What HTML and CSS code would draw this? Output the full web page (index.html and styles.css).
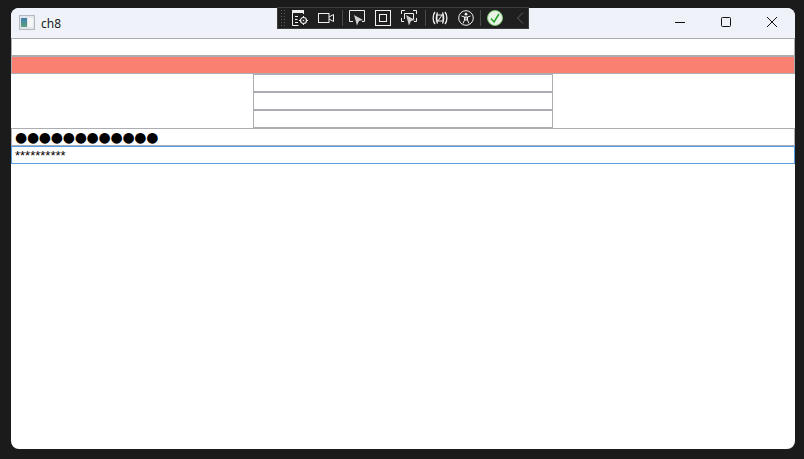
FILE: index.html
```html
<!DOCTYPE html>
<html lang="en">
<head>
    <meta charset="UTF-8">
    <meta name="viewport" content="width=device-width, initial-scale=1.0">
    <title>ch8</title>
    <link rel="stylesheet" href="styles.css">
</head>
<body>
    <div class="window">
        <header class="titlebar">
            <svg class="app-icon" width="16" height="16" viewBox="0 0 16 16">
                <defs>
                    <linearGradient id="appFill" x1="0" y1="0" x2="0" y2="1">
                        <stop offset="0" stop-color="#3f7fb0"/>
                        <stop offset="1" stop-color="#5fa07c"/>
                    </linearGradient>
                </defs>
                <rect x="0.5" y="0.5" width="15" height="14" fill="#e2e6ea" stroke="#b4b9bf"/>
                <rect x="2" y="3" width="6" height="9" fill="url(#appFill)"/>
                <rect x="9" y="3" width="5" height="9" fill="#f4f6f6"/>
            </svg>
            <span class="app-title">ch8</span>
            <div class="caption-buttons">
                <svg width="46" height="30" viewBox="0 0 46 30"><path d="M18 14.5h10" stroke="#111" fill="none"/></svg>
                <svg width="46" height="30" viewBox="0 0 46 30"><rect x="18.5" y="9.5" width="9" height="9" rx="1" stroke="#111" fill="none"/></svg>
                <svg width="46" height="30" viewBox="0 0 46 30"><path d="M18 9l10 10M28 9l-10 10" stroke="#111" fill="none"/></svg>
            </div>
        </header>

        <div class="content">
            <input class="field" type="text">
            <input class="field field-red" type="text">
            <div class="center-stack">
                <input class="field" type="text">
                <input class="field" type="text">
                <input class="field" type="text">
            </div>
            <input class="field field-bullets" type="text" value="●●●●●●●●●●●●">
            <input class="field field-focused" type="text" value="**********">
        </div>
    </div>

    <!-- debug toolbar floating over the title bar -->
    <div class="toolbar">
        <svg class="gripper" width="6" height="18" viewBox="0 0 6 18">
            <path d="M1 1h1v1H1zM4 1h1v1H4zM1 4h1v1H1zM4 4h1v1H4zM1 7h1v1H1zM4 7h1v1H4zM1 10h1v1H1zM4 10h1v1H4zM1 13h1v1H1zM4 13h1v1H4zM1 16h1v1H1zM4 16h1v1H4z" fill="#5c5c5c"/>
        </svg>
        <div class="tool-group">
            <svg width="16" height="16" viewBox="0 0 16 16">
                <path d="M0.5 1v14.5h6M11.500 1v3" stroke="#f0f0f0" fill="none"/>
                <rect x="0" y="0" width="12" height="3" fill="#f0f0f0"/>
                <path d="M3 6.500h3M3 9.500h2.500M3 12.500h3" stroke="#f0f0f0" fill="none"/>
                <circle cx="11.500" cy="10.500" r="3" stroke="#f0f0f0" stroke-width="1.200" fill="none"/>
                <circle cx="11.500" cy="10.500" r="0.800" fill="#f0f0f0"/>
                <path d="M11.500 6v1.500M11.500 13.500V15M7 10.500h1.500M14.500 10.500H16" stroke="#f0f0f0" fill="none"/>
            </svg>
            <svg width="16" height="16" viewBox="0 0 16 16">
                <rect x="0.500" y="3.500" width="10.500" height="9" stroke="#f0f0f0" fill="none"/>
                <path d="M11 7l4.500-2.500v7L11 9" stroke="#f0f0f0" fill="none"/>
            </svg>
        </div>
        <span class="sep"></span>
        <div class="tool-group">
            <svg width="16" height="16" viewBox="0 0 16 16">
                <path d="M4 11.500H0.500v-11h15v11H13" stroke="#f0f0f0" fill="none"/>
                <path d="M5 5l9 5-4 1-2 4.500z" fill="#cfcfcf"/>
            </svg>
            <svg width="16" height="16" viewBox="0 0 16 16">
                <rect x="0.500" y="0.500" width="15" height="15" stroke="#f0f0f0" fill="none"/>
                <rect x="4.500" y="4.500" width="7" height="7" stroke="#f0f0f0" fill="none"/>
            </svg>
            <svg width="16" height="16" viewBox="0 0 16 16">
                <path d="M0.500 4V0.500H4M12 0.500h3.500V4M0.500 8v3.500H3M15.500 8v3.500H13M3.500 9V3.500h9V9" stroke="#f0f0f0" fill="none"/>
                <path d="M5 5l9 5-4 1-2 4.500z" fill="#cfcfcf"/>
            </svg>
        </div>
        <span class="sep"></span>
        <div class="tool-group">
            <svg width="16" height="16" viewBox="0 0 16 16">
                <path d="M3 2C0.500 5 0.500 11 3 14M13 2C15.500 5 15.500 11 13 14M5.500 2.500C4 6 4 10 5.500 13.500M10.500 2.500C12 6 12 10 10.500 13.500" stroke="#f0f0f0" stroke-width="1.300" fill="none"/>
                <path d="M5 5h6v6H5zM5.500 11.500l5-7" stroke="#f0f0f0" fill="none"/>
            </svg>
            <svg width="16" height="16" viewBox="0 0 16 16">
                <circle cx="8" cy="8" r="7.300" stroke="#f0f0f0" fill="none"/>
                <circle cx="8" cy="4.200" r="1.400" fill="#f0f0f0"/>
                <path d="M3.500 6l3 1v3l-1.500 3.500M12.500 6l-3 1v3l1.500 3.500M6.500 7h3M6.500 10h3M8 7v3" stroke="#f0f0f0" fill="none"/>
            </svg>
        </div>
        <span class="sep sep-tight"></span>
        <svg class="check" width="16" height="16" viewBox="0 0 16 16">
            <circle cx="8" cy="8" r="7.500" fill="#e8f3e6" stroke="#7cc36f"/>
            <path d="M4 8.500l3 3.500 5-8" stroke="#2aa52a" stroke-width="1.600" fill="none"/>
        </svg>
        <svg class="chevron" width="8" height="12" viewBox="0 0 8 12">
            <path d="M7 0.500L1.500 6 7 11.500" stroke="#5e5e5e" fill="none"/>
        </svg>
    </div>
</body>
</html>
```

FILE: styles.css
```css
* {
    margin: 0;
    padding: 0;
    box-sizing: border-box;
}

html, body {
    height: 100%;
    overflow: hidden;
}

body {
    background-color: #1b1b1b;
    padding: 8px 9px 10px 11px;
    font-family: "Noto Sans", "Liberation Sans", sans-serif;
}

.window {
    height: 100%;
    background: white;
    border-radius: 8px;
    overflow: hidden;
    display: flex;
    flex-direction: column;
}

.titlebar {
    height: 30px;
    flex-shrink: 0;
    background: #eff3f9;
    display: flex;
    align-items: center;
    padding-left: 8px;
}

.app-title {
    margin-left: 6px;
    font-size: 12px;
    color: #1a1a1a;
}

.caption-buttons {
    margin-left: auto;
    display: flex;
}

.caption-buttons svg {
    display: block;
}

.content {
    display: flex;
    flex-direction: column;
}

.field {
    display: block;
    width: 100%;
    height: 18px;
    border: 1px solid #abadb3;
    border-radius: 0;
    outline: none;
    background: white;
    padding: 0 3px;
    color: black;
    font-family: "Liberation Sans", sans-serif;
    font-size: 13px;
}

.field-red {
    background: #fa8072;
}

.center-stack {
    width: 300px;
    align-self: center;
    display: flex;
    flex-direction: column;
}

.field-bullets {
    font-family: "DejaVu Sans", sans-serif;
    font-size: 14px;
    letter-spacing: -0.28px;
    padding-bottom: 1px;
}

.field-focused {
    border-color: #569de5;
}

.toolbar {
    position: absolute;
    left: 277px;
    top: 7px;
    width: 252px;
    height: 22px;
    background: #1f1f1f;
    border: 1px solid #3d3d3d;
    display: flex;
    align-items: center;
    padding-left: 2px;
}

.toolbar svg {
    display: block;
    flex-shrink: 0;
}

.gripper {
    margin-right: 6px;
}

.tool-group {
    display: flex;
    gap: 10px;
}

.sep {
    width: 1px;
    height: 16px;
    background: #4a4a4a;
    margin: 0 6px 0 8px;
}

.sep-tight {
    margin-left: 6px;
}

.chevron {
    margin-left: 13px;
}
```
